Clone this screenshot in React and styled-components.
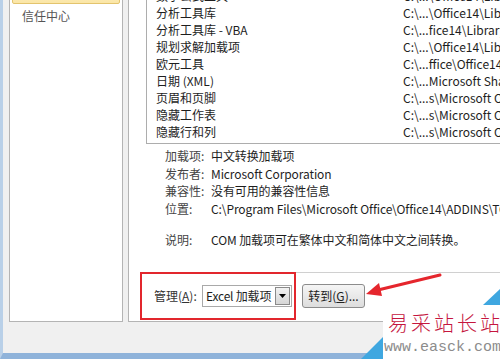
import styled, { createGlobalStyle } from 'styled-components';

const GlobalStyle = createGlobalStyle`
	html, body {
		margin: 0;
		padding: 0;
		background: #f0f0f0;
	}
	body {
		font-family: "Noto Sans CJK SC", "Noto Sans", sans-serif;
		font-size: 12px;
		color: #1e1e1e;
	}
`;

const addins = [
	['数学公式工具', 'C:\\...\\Office14\\Library\\'],
	['分析工具库', 'C:\\...\\Office14\\Library\\'],
	['分析工具库 - VBA', 'C:\\...fice14\\Library\\'],
	['规划求解加载项', 'C:\\...\\Office14\\Library\\'],
	['欧元工具', 'C:\\...ffice\\Office14\\'],
	['日期 (XML)', 'C:\\...Microsoft Shared\\'],
	['页眉和页脚', 'C:\\...s\\Microsoft Office'],
	['隐藏工作表', 'C:\\...s\\Microsoft Office'],
	['隐藏行和列', 'C:\\...s\\Microsoft Office'],
];

const details = [
	['加载项:', '中文转换加载项'],
	['发布者:', 'Microsoft Corporation'],
	['兼容性:', '没有可用的兼容性信息'],
	['位置:', 'C:\\Program Files\\Microsoft Office\\Office14\\ADDINS\\TCSCCONV.DLL'],
];

const App = () => {
	return (
		<>
			<GlobalStyle />
			<Frame>
				<Window>
					<Body>
						<Sidebar>
							<SelectedItem />
							<NavItem>信任中心</NavItem>
						</Sidebar>
						<Panel>
							<AddinList>
								{addins.map(([name, path]) => (
									<Row key={name}>
										<Cell>{name}</Cell>
										<Cell>{path}</Cell>
									</Row>
								))}
							</AddinList>
							<Details>
								{details.map(([label, value]) => (
									<DetailLine key={label}>
										<Label>{label}</Label>
										<Value>{value}</Value>
									</DetailLine>
								))}
								<Spacer />
								<DetailLine>
									<Label>说明:</Label>
									<Value>COM 加载项可在繁体中文和简体中文之间转换。</Value>
								</DetailLine>
							</Details>
							<Manage>
								<ManageLabel>
									管理(<u>A</u>):
								</ManageLabel>
								<Select>
									<SelectText>Excel 加载项</SelectText>
									<DropButton>
										<svg width="7" height="4" viewBox="0 0 7 4">
											<path d="M0 0h7L3.5 4z" fill="#000" />
										</svg>
									</DropButton>
								</Select>
								<GoButton>
									转到(<u>G</u>)...
								</GoButton>
							</Manage>
						</Panel>
					</Body>
					<Footer />
				</Window>

				<RedBox />
				<Arrow width="80" height="30" viewBox="0 0 80 30">
					<path d="M76 3 L14 18" stroke="#e5262d" strokeWidth="3" strokeLinecap="round" />
					<path d="M2 22 L15 11 L18 24 Z" fill="#e5262d" />
				</Arrow>
				<Watermark>
					<svg width="148" height="80" viewBox="0 0 148 80">
						<path d="M131 23 L148 7 L148 23 Z" fill="#3fa7e0" />
						<path d="M31 23 H148 V80 H31 Z" fill="#fff" />
						<path d="M6 80 L31 55 L31 80 Z" fill="#3fa7e0" />
					</svg>
					<MarkTitle>易采站长站</MarkTitle>
					<MarkUrl>www.easck.com</MarkUrl>
				</Watermark>
			</Frame>
		</>
	);
};

const Frame = styled.div`
	position: relative;
	width: 500px;
	height: 359px;
	overflow: hidden;
`;

const Window = styled.div`
	width: 500px;
	height: 359px;
	box-sizing: border-box;
	background: #f0f0f0;
	border-left: 3px solid #b9d0e8;
	border-bottom: 6px solid #8fb3da;
	display: flex;
	flex-direction: column;
`;

const Body = styled.div`
	height: 322px;
	display: flex;
	gap: 5px;
	padding-left: 6px;
`;

const Sidebar = styled.div`
	width: 112px;
	background: #fff;
	border: 1px solid #b4b4b4;
	border-top: none;
`;

const SelectedItem = styled.div`
	height: 22px;
	margin: -20px 2px 0;
	border: 1px solid #e3c46e;
	border-radius: 2px;
	background: linear-gradient(#fdf4d7, #fbe6a6);
`;

const NavItem = styled.div`
	padding: 3px 0 0 12px;
	line-height: 18px;
	color: #555;
`;

const Panel = styled.div`
	flex: 1;
	background: #fff;
	border-left: 1px solid #b4b4b4;
	border-bottom: 1px solid #b4b4b4;
	padding-left: 17px;
	display: flex;
	flex-direction: column;
	min-width: 0;
`;

const AddinList = styled.div`
	margin-top: -13px;
	border: 1px solid #adadad;
	border-top: none;
	border-right: none;
	padding-bottom: 3px;
`;

const Row = styled.div`
	display: grid;
	grid-template-columns: 247px 1fr;
	height: 17px;
	line-height: 17px;
	padding-left: 9px;
	white-space: nowrap;
`;

const Cell = styled.div`
	overflow: hidden;
`;

const Details = styled.div`
	padding: 3px 0 0 19px;
	color: #333;
`;

const DetailLine = styled.div`
	display: flex;
	height: 17.6px;
	line-height: 17.6px;
	white-space: nowrap;
`;

const Label = styled.div`
	width: 46px;
	flex-shrink: 0;
	color: #444;
`;

const Value = styled.div`
	color: #1e1e1e;
	letter-spacing: -0.1px;
`;

const Spacer = styled.div`
	height: 14px;
`;

const Manage = styled.div`
	margin-top: 23px;
	border-top: 1px solid #d0d0d0;
	display: flex;
	align-items: center;
	padding: 11px 0 0 8px;
	white-space: nowrap;
`;

const ManageLabel = styled.span`
	width: 48px;
	color: #333;
`;

const Select = styled.div`
	width: 88px;
	height: 20px;
	border: 1px solid #a9a9a9;
	background: #fff;
	display: flex;
	align-items: center;
	justify-content: space-between;
`;

const SelectText = styled.span`
	padding-left: 3px;
	letter-spacing: -0.2px;
`;

const DropButton = styled.div`
	width: 15px;
	height: 18px;
	margin-right: 1px;
	box-sizing: border-box;
	border: 1px solid #8a8a8a;
	background: linear-gradient(#f2f2f2, #d6d6d6);
	display: flex;
	align-items: center;
	justify-content: center;
`;

const GoButton = styled.div`
	margin-left: 10px;
	width: 63px;
	height: 24px;
	box-sizing: border-box;
	border: 1px solid #8c8c8c;
	border-radius: 3px;
	background: linear-gradient(#f5f5f5, #dddddd);
	display: flex;
	align-items: center;
	justify-content: center;
	color: #222;
`;

const Footer = styled.div`
	flex: 1;
`;

const RedBox = styled.div`
	position: absolute;
	left: 140px;
	top: 272px;
	width: 152px;
	height: 44px;
	border: 2px solid #e2262d;
`;

const Arrow = styled.svg`
	position: absolute;
	left: 364px;
	top: 272px;
`;

const Watermark = styled.div`
	position: absolute;
	left: 352px;
	top: 282px;
	width: 148px;
	height: 80px;
`;

const MarkTitle = styled.div`
	position: absolute;
	left: 36px;
	top: 27px;
	font-size: 20px;
	line-height: 28px;
	font-weight: 300;
	letter-spacing: 3px;
	color: #c5163e;
	white-space: nowrap;
`;

const MarkUrl = styled.div`
	position: absolute;
	left: 32px;
	top: 57px;
	font-family: "Liberation Mono", monospace;
	font-size: 15px;
	line-height: 18px;
	color: #8c8c8c;
	white-space: nowrap;
`;

export default App;
